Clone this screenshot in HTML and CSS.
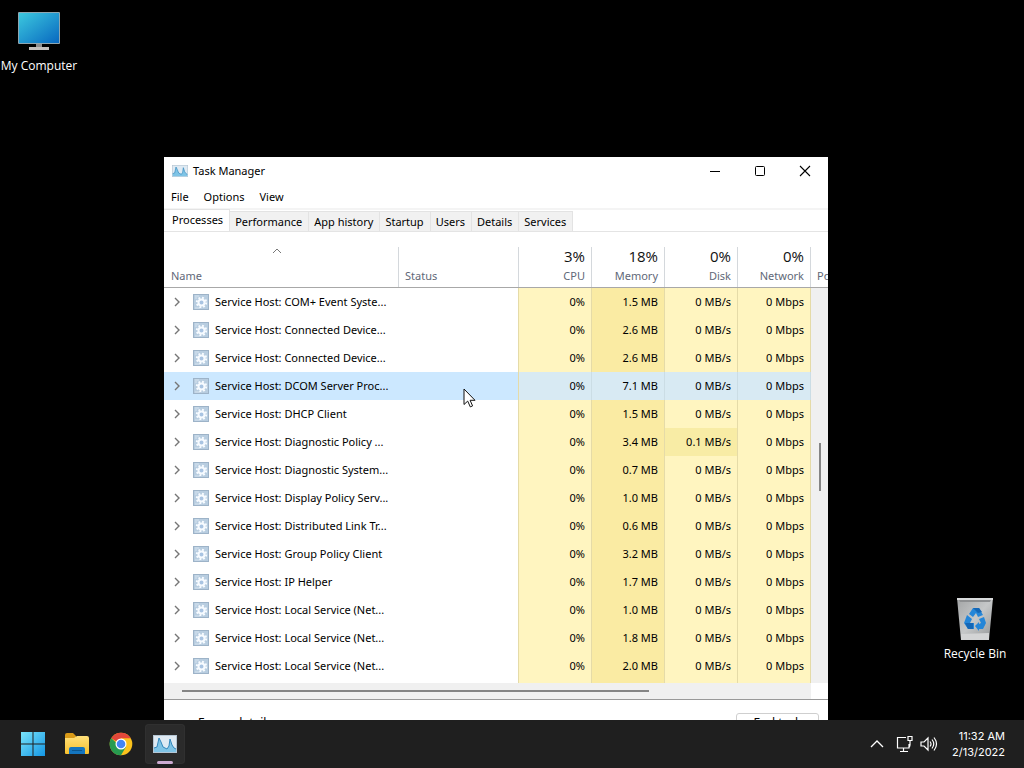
FILE: index.html
```html
<!DOCTYPE html>
<html lang="en">
<head>
<meta charset="utf-8">
<title>Task Manager</title>
<link rel="stylesheet" href="styles.css">
</head>
<body>
<svg class="defs" aria-hidden="true">
  <defs>
    <linearGradient id="screen" x1="0" y1="0" x2="1" y2="1"><stop offset="0" stop-color="#3cc8de"/><stop offset="1" stop-color="#0868c0"/></linearGradient>
    <linearGradient id="win" x1="0" y1="0" x2="1" y2="1"><stop offset="0" stop-color="#79e4fa"/><stop offset="1" stop-color="#1496e4"/></linearGradient>
    <linearGradient id="folder" x1="0" y1="0" x2="0" y2="1"><stop offset="0" stop-color="#ffe07a"/><stop offset="1" stop-color="#f7c02c"/></linearGradient>
    <linearGradient id="bin" x1="0" y1="0" x2="1" y2="1"><stop offset="0" stop-color="#a2a4a5"/><stop offset=".5" stop-color="#c6c8c9"/><stop offset="1" stop-color="#929495"/></linearGradient>
    <symbol id="chart" viewBox="0 0 24 18">
      <rect x=".5" y=".5" width="23" height="17" fill="#dfeaf3" stroke="#b5c6d4"/>
      <path d="M1 17v-4l3-1 2-9 2 4 2 5 4 2 2-3 1-7 2 6 2 3 2 1v3z" fill="#7fc4e6"/>
      <path d="M1 13l3-1 2-9 2 4 2 5 4 2 2-3 1-7 2 6 2 3 2 1" fill="none" stroke="#3288bd"/>
    </symbol>
    <symbol id="gear" viewBox="0 0 16 16">
      <rect x=".5" y=".5" width="15" height="15" fill="#b8cde0" stroke="#9db3c8"/>
      <path d="M2 2h4M2 4h2M2 14h5" stroke="#d7e4ef"/>
      <circle cx="8.500" cy="8.500" r="4.700" fill="none" stroke="#f7fbff" stroke-width="2" stroke-dasharray="1.850 1.840"/>
      <circle cx="8.500" cy="8.500" r="3" fill="#a9c4e2" stroke="#f7fbff" stroke-width="2"/>
    </symbol>
    <symbol id="chev" viewBox="0 0 6 10"><path d="M1 1l4 4-4 4" fill="none" stroke="#767676" stroke-width="1.400"/></symbol>
  </defs>
</svg>
<main class="desktop">
  <a class="shortcut computer" href="#">
    <svg width="44" height="40" viewBox="0 0 44 40"><rect x="1" y="1" width="42" height="32" rx="1" fill="#8fa6b0"/><rect x="2" y="2" width="40" height="30" fill="url(#screen)"/><path d="M19 33h6v4h-6z" fill="#8d8d8d"/><path d="M12 36h20v3H12z" fill="#c4c0bd"/></svg>
    <span>My Computer</span>
  </a>
  <a class="shortcut recycle" href="#">
    <svg width="36" height="44" viewBox="0 0 36 44"><path d="M0 1h36l-4 42H4z" fill="url(#bin)"/><path d="M0 1h36v2H0z" fill="#d9dbdc"/><path d="M2 3h32l-1 2H3z" fill="#8d8f91"/><path d="M4 37l28-1v7H4z" fill="#d3d4d5"/>
      <g fill="#2586d8"><path d="M12 17l4-6h6l4 7-5 2-2-4-3 4z"/><path d="M10 18l5 4-2 4h4v6h-6l-4-6z"/><path d="M22 22l5-2 2 6-3 6h-4v2l-4-5 4-4v2l2-1z"/></g><path d="M16 11h6l3 4-4 1zM8 26h8v6h-5z" fill="#1567b6"/></svg>
    <span>Recycle Bin</span>
  </a>

  <section class="window" aria-label="Task Manager">
    <header class="titlebar">
      <svg class="appicon"><use href="#chart"/></svg>
      <h1>Task Manager</h1>
      <button class="caption" aria-label="Minimize"><svg width="12" height="12"><path d="M1 6.500h10" stroke="#000"/></svg></button>
      <button class="caption" aria-label="Maximize"><svg width="12" height="12"><rect x="1.500" y="1.500" width="9" height="9" rx="1" fill="none" stroke="#000"/></svg></button>
      <button class="caption" aria-label="Close"><svg width="12" height="12"><path d="M1 1l10 10M11 1L1 11" stroke="#000" stroke-width="1.100"/></svg></button>
    </header>
    <nav class="menu"><button>File</button><button>Options</button><button>View</button></nav>
    <div class="tabs" role="tablist">
      <button class="tab active" role="tab" aria-selected="true">Processes</button><button class="tab" role="tab">Performance</button><button class="tab" role="tab">App history</button><button class="tab" role="tab">Startup</button><button class="tab" role="tab">Users</button><button class="tab" role="tab">Details</button><button class="tab" role="tab">Services</button>
    </div>
    <div class="list">
      <table>
        <colgroup><col class="c-name"><col class="c-status"><col class="c-num"><col class="c-num"><col class="c-num"><col class="c-num"><col></colgroup>
        <thead><tr>
          <th class="left"><svg class="sort" width="10" height="6"><path d="M1 5l4-4 4 4" fill="none" stroke="#777"/></svg>Name</th>
          <th class="left">Status</th>
          <th><b>3%</b>CPU</th><th><b>18%</b>Memory</th><th><b>0%</b>Disk</th><th><b>0%</b>Network</th><th class="left more">Po</th>
        </tr></thead>
        <tbody id="rows"></tbody>
      </table>
      <div class="vbar"><i></i></div>
    </div>
    <div class="hbar"><i></i></div>
    <footer class="bottom"><button class="fewer">Fewer details</button><button class="end">End task</button></footer>
  </section>

  <svg class="cursor" width="13" height="20" viewBox="0 0 13 20"><path d="M1 1v15.500l3.700-3.400 2.600 5.800 2.300-1-2.500-5.600H12z" fill="#fff" stroke="#111"/></svg>
</main>
<footer class="taskbar">
  <button class="task" aria-label="Start"><svg width="24" height="24" viewBox="0 0 24 24"><path d="M0 0h11.500v11.500H0zM12.500 0H24v11.500H12.500zM0 12.500h11.500V24H0zM12.500 12.500H24V24H12.500z" fill="url(#win)"/></svg></button>
  <button class="task" aria-label="File Explorer"><svg width="26" height="24" viewBox="0 0 26 24"><path d="M1 3q0-2 2-2h6l3 3v4H1z" fill="#d99a17"/><path d="M1 6h9l3-2h10q2 0 2 2v15q0 1-1 1H2q-1 0-1-1z" fill="url(#folder)"/><path d="M5 22v-5q0-2 2-2h12q2 0 2 2v5z" fill="#1475bf"/><path d="M8 18h10v1H8z" fill="#0b568f"/></svg></button>
  <button class="task" aria-label="Chrome"><svg width="24" height="24" viewBox="0 0 24 24"><circle cx="12" cy="12" r="11.300" fill="#fbc21c"/><path d="M12 12L2.200 6.300A11.300 11.300 0 0 1 21.800 6.300H12z" fill="#e2473a"/><path d="M2.200 6.300A11.300 11.300 0 0 0 12 23.300l5-8.500H12z" fill="#279b50"/><circle cx="12" cy="12" r="5.500" fill="#fff"/><circle cx="12" cy="12" r="4.300" fill="#4285f4"/></svg></button>
  <button class="task current" aria-label="Task Manager"><svg width="24" height="18"><use href="#chart"/></svg></button>
  <div class="tray">
    <button aria-label="Show hidden icons"><svg width="14" height="8"><path d="M1 7l6-6 6 6" fill="none" stroke="#fff" stroke-width="1.300"/></svg></button>
    <button aria-label="Network"><svg width="18" height="18" fill="none" stroke="#fff" stroke-width="1.200"><path d="M10 2.500H1.500v10.500H13V9M7.500 13v3M4 16.500h8M12 1.500h4v4h-4zM14 5.500V10q0 2.500-2 3"/></svg></button>
    <button aria-label="Volume"><svg width="18" height="16" fill="none" stroke="#fff" stroke-width="1.200"><path d="M1 6h3l4-4v12l-4-4H1zM10 5.500q2 2.500 0 5M12 3.500q3.500 4.500 0 9M14 1.500q5 6.500 0 13"/></svg></button>
    <time class="clock" datetime="2022-02-13T11:32">11:32 AM<br>2/13/2022</time>
  </div>
</footer>
<script src="rows.js"></script>
</body>
</html>
```

FILE: styles.css
```css
* { box-sizing: border-box; }
body { margin: 0; height: 100vh; display: flex; flex-direction: column; overflow: hidden; background: #000; font: 12px/16px "Open Sans", "Noto Sans", sans-serif; color: #000; }
button { margin: 0; padding: 0; border: 0; background: none; font: inherit; color: inherit; }
h1 { margin: 0; font-size: 11px; font-weight: 400; }
svg { display: block; flex: none; }
.defs { position: absolute; width: 0; height: 0; }
.desktop { position: relative; flex: 1; overflow: hidden; }

.shortcut { position: absolute; display: flex; flex-direction: column; align-items: center; gap: 7px; width: 80px; color: #fff; text-decoration: none; white-space: nowrap; }
.computer { left: -1px; top: 11px; }
.recycle { right: 9px; top: 597px; gap: 5px; }

.window { position: absolute; left: 164px; top: 157px; width: 664px; background: #fff; font-family: "Noto Sans", "Open Sans", sans-serif; font-size: 11px; }
.titlebar { display: flex; align-items: center; height: 28px; padding: 0 1px 0 8px; }
.appicon { width: 16px; height: 12px; margin-right: 5px; }
.titlebar h1 { flex: 1; }
.caption { width: 45px; height: 28px; display: grid; place-items: center; }
.menu { display: flex; gap: 15px; height: 23px; padding: 0 7px; }
.tabs { display: flex; align-items: flex-end; height: 24px; border-bottom: 1px solid #e4e4e4; border-top: 2px solid #f4f4f4; }
.tab { height: 20px; padding: 0 6px 0 5px; background: #f1f1f1; border: 1px solid #e3e3e3; border-left: 0; border-bottom: 0; white-space: nowrap; }
.tab.active { height: 22px; padding: 0 6px 2px 8px; background: #fff; }

.list { position: relative; overflow: hidden; }
table { width: 100%; table-layout: fixed; border-collapse: separate; border-spacing: 0; }
.c-name { width: 235px; }
.c-status { width: 120px; }
.c-num { width: 73px; }
th { height: 56px; padding: 11px 7px 3px 6px; vertical-align: bottom; text-align: right; font-weight: 400; color: #5f6878; border-bottom: 1px solid #a8a8a8; background: linear-gradient(#d4d8dc, #d4d8dc) right bottom / 1px 40px no-repeat; white-space: nowrap; }
th b { display: block; margin-bottom: 3px; font-family: "Open Sans", sans-serif; font-size: 15px; line-height: 18px; font-weight: 400; color: #111; }
th.left { text-align: left; }
th:first-child { padding-left: 7px; }
th.more { padding-right: 0; background: none; }
.sort { margin: 0 auto 14px 101px; }
td { height: 28px; padding: 0 6px 1px; text-align: right; white-space: nowrap; }
td.num { background: #fff5c0; border-right: 1px solid #e5dba8; }
td.num.mem { background: #faeba3; }
td.num.warm { background: #f8eca5; }
td.status { border-right: 1px solid #e5dba8; }
td.name { padding-left: 10px; padding-right: 0; }
tbody tr:last-child td { height: 31px; padding-bottom: 4px; }
.process { display: flex; align-items: center; text-align: left; }
.process button { width: 6px; margin-right: 13px; }
.process svg.gear { width: 16px; height: 16px; margin-right: 6px; }
tr.selected td { background: #cce8ff; }
tr.selected td.num { background: #d8eaf3; border-color: #cbdde5; }
.vbar { position: absolute; right: 0; top: 56px; bottom: 0; width: 17px; background: #f0f0f0; }
.vbar i { display: block; width: 2px; height: 48px; margin: 155px 0 0 8px; background: #858585; }
.hbar { height: 17px; padding: 7px 0 0 18px; border-bottom: 1px solid #999; background: linear-gradient(#f0f0f0, #f0f0f0) left / calc(100% - 17px) 100% no-repeat; }
.hbar i { display: block; width: 467px; height: 2px; background: #858585; }
.bottom { display: flex; justify-content: space-between; align-items: center; height: 48px; padding: 0 9px 0 34px; font-size: 12px; line-height: 14px; }
.bottom button { padding-bottom: 2px; }
.end { width: 83px; height: 22px; border: 1px solid #cfcfcf; border-radius: 3px; }
.cursor { position: absolute; left: 463px; top: 388px; }

.taskbar { display: flex; align-items: center; gap: 4px; height: 48px; padding: 0 19px 0 13px; background: #1f1f1f; color: #fff; }
.task { width: 40px; height: 40px; display: grid; place-items: center; border-radius: 4px; }
.current { background: #2b2b2b; box-shadow: inset 0 0 0 1px #303030; position: relative; }
.current::after { content: ""; position: absolute; left: 12px; bottom: 0; width: 16px; height: 3px; border-radius: 2px; background: #cdabd2; }
.tray { display: flex; align-items: center; margin-left: auto; gap: 6px; }
.tray button:first-child { margin-right: 6px; }
.clock { margin-left: 8px; text-align: right; font-family: Inter, sans-serif; font-size: 11px; }
```

FILE: rows.js
```javascript
const processes = [
  ["COM+ Event Syste...", "1.5"],
  ["Connected Device...", "2.6"],
  ["Connected Device...", "2.6"],
  ["DCOM Server Proc...", "7.1"],
  ["DHCP Client", "1.5"],
  ["Diagnostic Policy ...", "3.4", "0.1"],
  ["Diagnostic System...", "0.7"],
  ["Display Policy Serv...", "1.0"],
  ["Distributed Link Tr...", "0.6"],
  ["Group Policy Client", "3.2"],
  ["IP Helper", "1.7"],
  ["Local Service (Net...", "1.0"],
  ["Local Service (Net...", "1.8"],
  ["Local Service (Net...", "2.0"]
];
document.getElementById("rows").innerHTML = processes.map(([name, memory, disk], i) => `
  <tr${i === 3 ? ' class="selected"' : ""}>
    <td class="name"><div class="process"><button aria-label="Expand"><svg width="6" height="10"><use href="#chev"/></svg></button><svg class="gear"><use href="#gear"/></svg>Service Host: ${name}</div></td>
    <td class="status"></td>
    <td class="num">0%</td>
    <td class="num mem">${memory} MB</td>
    <td class="num${disk ? " warm" : ""}">${disk || "0"} MB/s</td>
    <td class="num">0 Mbps</td>
    <td></td>
  </tr>`).join("");
```
